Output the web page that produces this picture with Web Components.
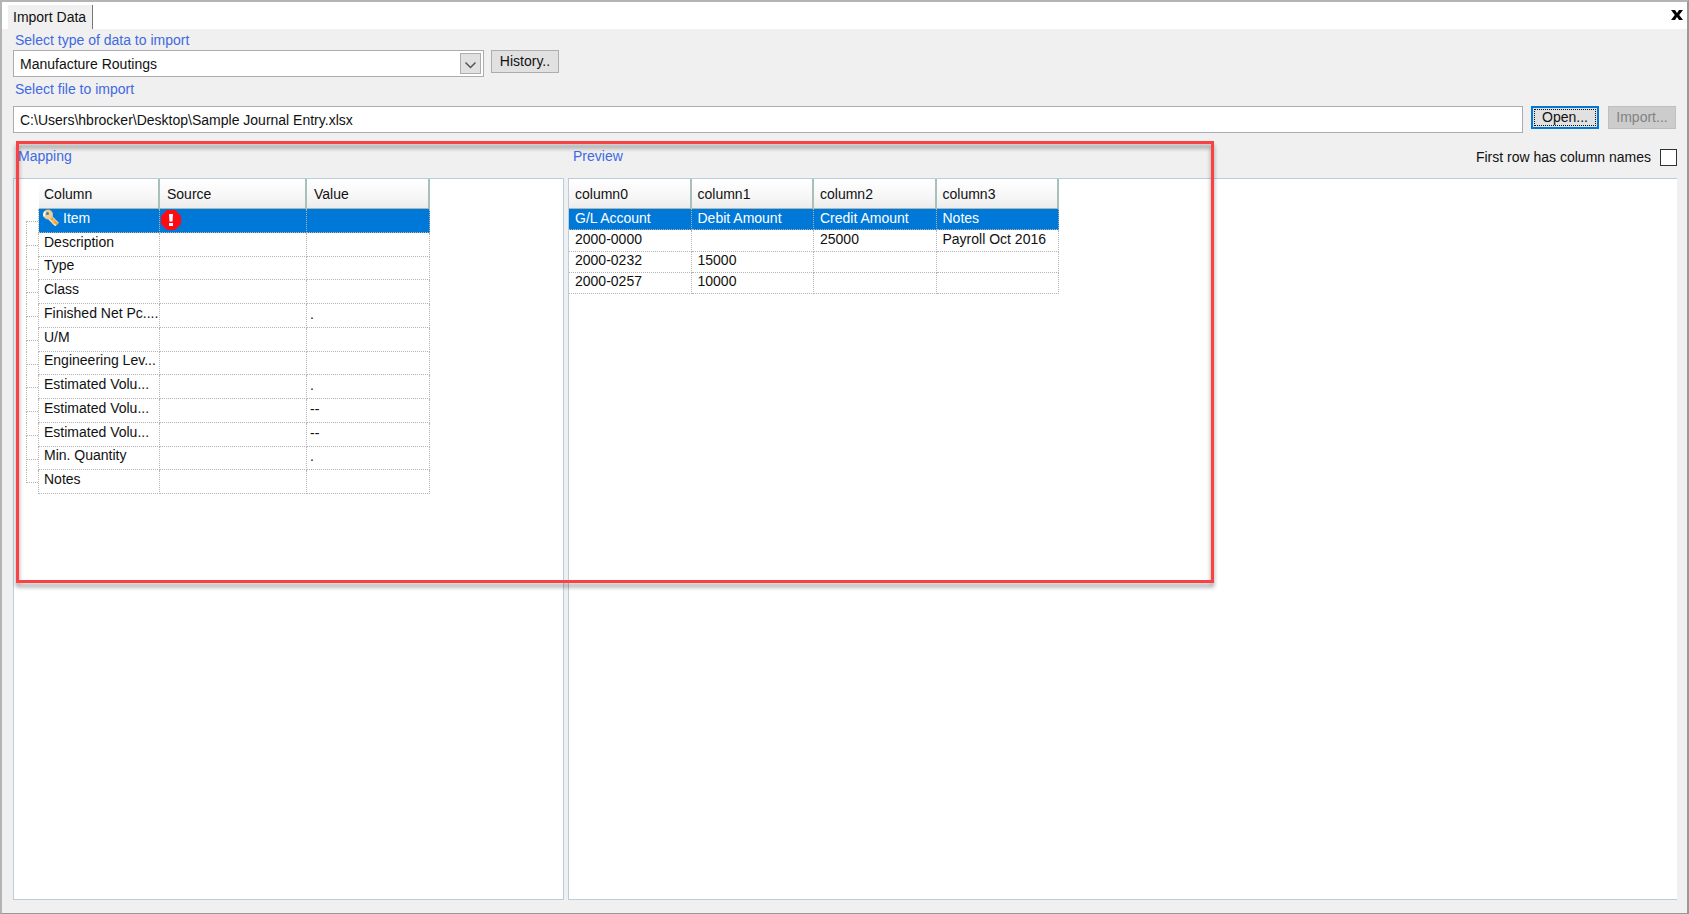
<!DOCTYPE html>
<html lang="en">
<head>
<meta charset="utf-8">
<title>Import Data</title>
<style>
  html, body { margin: 0; }
  body { font: 14px/16px "Liberation Sans", Arial, sans-serif; color: #111; background: #f0f0f0; }
</style>
</head>
<body>
<import-window></import-window>

<script>
const define = (name, html, setup) => {
  const template = document.createElement('template');
  template.innerHTML = html;
  customElements.define(name, class extends HTMLElement {
    constructor() {
      super();
      this.attachShadow({ mode: 'open' }).append(template.content.cloneNode(true));
    }
    connectedCallback() {
      if (setup && !this.ready) { this.ready = true; setup(this, this.shadowRoot); }
    }
  });
};

/* Key marking a required column */
define('key-icon', `
  <style>:host { display: block; width: 18px; height: 18px; white-space: normal; } svg { display: block; }</style>
  <svg width="18" height="18" viewBox="0 0 18 18" aria-hidden="true">
    <path d="M8 8.500L15 15.500" stroke="#fff3d8" stroke-width="5"/>
    <path d="M8 8L15.500 15.500" stroke="#eda33a" stroke-width="3"/>
    <path d="M10 13l2 2M12 11.500l-2 2" stroke="#f7c778" stroke-width="2"/>
    <circle cx="6" cy="5.500" r="4.500" fill="#f3cf8e" stroke="#d9c9a0"/>
    <path d="M2.500 7.500a4 4 0 0 1 1-5" stroke="#fff" stroke-width="1.500" fill="none"/>
    <circle cx="5.500" cy="4.500" r="1.500" fill="#3b7fb8"/>
  </svg>`);

/* Round red warning mark */
define('error-icon', `
  <style>:host { display: block; width: 20px; height: 20px; white-space: normal; } svg { display: block; }</style>
  <svg width="20" height="20" viewBox="0 0 20 20" role="img" aria-label="Error">
    <path d="M6 0h8l6 6v8l-6 6H6l-6-6V6z" fill="#ff0a12"/>
    <path d="M8 4h4l-.500 7.500h-3z" fill="#fff"/>
    <rect x="8" y="13" width="4" height="3" fill="#fff"/>
  </svg>`);

define('push-button', `
  <style>
    :host { display: block; }
    button { box-sizing: border-box; display: block; width: 68px; height: 23px; margin: 0; padding: 0 0 1px;
      font: inherit; line-height: 16px; color: #111; background: #e1e1e1; border: 1px solid #adadad; }
    :host([focused]) button { position: relative; border: 2px solid #0078d7; }
    :host([focused]) button::after { content: ""; position: absolute; inset: 1px; border: 1px dotted #111; }
    button:disabled { color: #838383; background: #ccc; border-color: #bfbfbf; }
  </style>
  <button type="button"><slot></slot></button>`,
  (host, root) => { root.querySelector('button').disabled = host.hasAttribute('disabled'); });

define('select-field', `
  <style>
    :host { display: block; width: 471px; }
    label { display: block; height: 16px; margin: 0 0 2px 2px; color: #4169e1; }
    .box { position: relative; }
    select { appearance: none; box-sizing: border-box; display: block; width: 100%; height: 27px; margin: 0;
      padding: 0 28px 0 6px; font: inherit; color: #111; background: #fff; border: 1px solid #abadb3; border-radius: 0; }
    svg { position: absolute; top: 3px; right: 3px; pointer-events: none; }
  </style>
  <label for="field"></label>
  <div class="box">
    <select id="field"><option></option></select>
    <svg width="21" height="21" viewBox="0 0 21 21" aria-hidden="true">
      <rect x=".5" y=".5" width="20" height="20" fill="#e1e1e1" stroke="#adadad"/>
      <path d="M5.500 9.500l5 5 5-5" fill="none" stroke="#555" stroke-width="1.500"/>
    </svg>
  </div>`,
  (host, root) => {
    root.querySelector('label').textContent = host.getAttribute('label');
    root.querySelector('option').textContent = host.getAttribute('value');
  });

define('file-field', `
  <style>
    :host { display: block; }
    label { display: block; height: 16px; margin: 0 0 9px 2px; color: #4169e1; }
    .row { display: flex; gap: 8px; padding-right: 1px; }
    input { box-sizing: border-box; flex: 1; min-width: 0; height: 27px; margin: 0; padding: 0 6px; font: inherit;
      color: #111; background: #fff; border: 1px solid #abadb3; border-radius: 0; outline: 0; }
  </style>
  <label for="field"></label>
  <div class="row"><input id="field" type="text"><slot></slot></div>`,
  (host, root) => {
    root.querySelector('label').textContent = host.getAttribute('label');
    root.querySelector('input').value = host.getAttribute('value');
  });

define('check-field', `
  <style>
    :host { display: flex; align-items: center; gap: 9px; padding-top: 3px; }
    input { appearance: none; box-sizing: border-box; width: 17px; height: 17px; margin: 0; background: #fff; border: 1px solid #333; }
  </style>
  <label for="field"><slot></slot></label><input id="field" type="checkbox">`);

define('data-pane', `
  <style>
    :host { display: flex; flex-direction: column; min-width: 0; }
    header { display: flex; align-items: center; justify-content: space-between; height: 45px; padding-left: 5px; }
    h2 { margin: 0; font: inherit; color: #4169e1; }
    .body { flex: 1; background: #fff; border: 1px solid #b9cde0; }
    :host([flush]) .body { border-right: 0; }
  </style>
  <header><h2></h2><slot name="option"></slot></header>
  <div class="body"><slot></slot></div>`,
  (host, root) => { root.querySelector('h2').textContent = host.getAttribute('heading'); });

const gridStyle = `
  table { table-layout: fixed; border-collapse: separate; border-spacing: 0; }
  th, td { box-sizing: border-box; overflow: hidden; text-align: left; font-weight: normal; white-space: nowrap; }
  thead th { height: 30px; padding: 0 6px; background: linear-gradient(#fff, #f7f7f7 60%, #ececec);
    border-right: 2px solid #a9c0b9; border-bottom: 1px solid #a9b8b4; }
  tbody th, tbody td { border-right: 1px dotted #b4b4b4; border-bottom: 1px dotted #b4b4b4; }
  .selected > .cell { color: #fff; background: #0078d7; }`;

define('mapping-table', `
  <style>
    :host { display: block; }
    ${gridStyle}
    table { width: 416px; height: 315px; }
    .tree { width: 25px; }
    .name { width: 121px; } .source { width: 147px; }
    thead .gutter { padding: 0; background: none; border: 0; }
    thead .gutter + th { padding-left: 5px; }
    thead th:nth-child(n + 3) { padding-left: 7px; }
    tbody .gutter { position: relative; padding: 0; border-bottom: 0; }
    .gutter::before, .gutter::after { content: ""; position: absolute; left: 12px; right: 0; border: 0 dotted #b4b4b4; }
    tbody .gutter::before { top: 0; height: 12px; border-width: 0 0 1px 1px; }
    tbody .gutter::after { top: 12px; bottom: 0; border-left-width: 1px; }
    tbody tr:first-child .gutter::before { border-left-color: transparent; }
    tbody tr:last-child .gutter::after { display: none; }
    tbody .cell { padding: 0 2px 5px 5px; }
    tbody td.cell { padding: 0 3px 3px; }
    .keyed { display: flex; align-items: center; gap: 3px; height: 16px; margin-left: -2px; }
    tbody td.alert { padding: 0 0 0 1px; }
  </style>
  <table>
    <colgroup><col class="tree"><col class="name"><col class="source"><col></colgroup>
    <thead><tr><td class="gutter"></td><th scope="col">Column</th><th scope="col">Source</th><th scope="col">Value</th></tr></thead>
    <tbody></tbody>
  </table>`,
  (host, root) => {
    const rows = [['Item', ''], ['Description', ''], ['Type', ''], ['Class', ''], ['Finished Net Pc....', '.'], ['U/M', ''],
      ['Engineering Lev...', ''], ['Estimated Volu...', '.'], ['Estimated Volu...', '--'], ['Estimated Volu...', '--'],
      ['Min. Quantity', '.'], ['Notes', '']];
    root.querySelector('tbody').innerHTML = rows.map(([name, value], i) => `<tr${i ? '' : ' class="selected"'}><td class="gutter"></td>` +
      (i ? `<th class="cell" scope="row">${name}</th><td class="cell"></td>`
         : `<th class="cell" scope="row"><div class="keyed"><key-icon></key-icon>${name}</div></th><td class="cell alert"><error-icon></error-icon></td>`) +
      `<td class="cell">${value}</td></tr>`).join('');
  });

define('preview-table', `
  <style>
    :host { display: block; }
    ${gridStyle}
    table { width: 490px; height: 115px; }
    tbody td { padding: 0 5px 3px 6px; }
  </style>
  <table>
    <thead><tr><th scope="col">column0</th><th scope="col">column1</th><th scope="col">column2</th><th scope="col">column3</th></tr></thead>
    <tbody></tbody>
  </table>`,
  (host, root) => {
    const rows = [['G/L Account', 'Debit Amount', 'Credit Amount', 'Notes'], ['2000-0000', '', '25000', 'Payroll Oct 2016'],
      ['2000-0232', '15000', '', ''], ['2000-0257', '10000', '', '']];
    root.querySelector('tbody').innerHTML = rows.map((row, i) =>
      `<tr${i ? '' : ' class="selected"'}>${row.map(text => `<td class="cell">${text}</td>`).join('')}</tr>`).join('');
  });

define('tab-strip', `
  <style>
    :host { display: flex; align-items: flex-end; justify-content: space-between; height: 27px; padding: 0 4px 0 6px; background: #fff; }
    .tab { box-sizing: border-box; height: 24px; margin: 0; padding: 0 6px 1px 5px; font: inherit; color: #111;
      background: #f0f0f0; border: 0; border-right: 1px solid #777; }
    .close { align-self: center; width: 12px; height: 14px; margin: 0; padding: 0 0 2px; background: none; border: 0; }
    svg { display: block; }
  </style>
  <button class="tab" type="button" role="tab" aria-selected="true"><slot></slot></button>
  <button class="close" type="button" aria-label="Close">
    <svg width="12" height="12" viewBox="0 0 12 12"><path d="M0 1h4l2 3 2-3h4L8.200 6 12 11H8L6 8l-2 3H0l3.800-5z" fill="#000"/></svg>
  </button>`);

define('import-window', `
  <style>
    :host { box-sizing: border-box; display: flex; flex-direction: column; min-height: 100vh; background: #f0f0f0;
      border: solid #b4b4b4; border-width: 2px 2px 1px; border-right-color: #999; border-bottom-color: #999; }
    main { flex: 1; display: flex; flex-direction: column; padding: 3px 10px 13px 11px; }
    .type { display: flex; align-items: flex-start; gap: 7px; }
    .type push-button { margin-top: 18px; }
    file-field { margin-top: 4px; }
    .open { margin-right: 1px; }
    .panes { position: relative; flex: 1; display: grid; grid-template-columns: 551px minmax(0, 1fr); gap: 4px; }
    .highlight { position: absolute; box-sizing: border-box; left: 3px; top: 8px; width: 72%; height: 442px;
      border: 3px solid #fb4143; filter: drop-shadow(0 4px 2px rgba(0, 0, 0, .4)); pointer-events: none; }
  </style>
  <tab-strip>Import Data</tab-strip>
  <main>
    <div class="type">
      <select-field label="Select type of data to import" value="Manufacture Routings"></select-field>
      <push-button>History..</push-button>
    </div>
    <file-field label="Select file to import" value="C:\\Users\\hbrocker\\Desktop\\Sample Journal Entry.xlsx">
      <push-button class="open" focused>Open...</push-button>
      <push-button disabled>Import...</push-button>
    </file-field>
    <div class="panes">
      <data-pane heading="Mapping"><mapping-table></mapping-table></data-pane>
      <data-pane heading="Preview" flush>
        <check-field slot="option">First row has column names</check-field>
        <preview-table></preview-table>
      </data-pane>
      <div class="highlight"></div>
    </div>
  </main>`);
</script>
</body>
</html>
